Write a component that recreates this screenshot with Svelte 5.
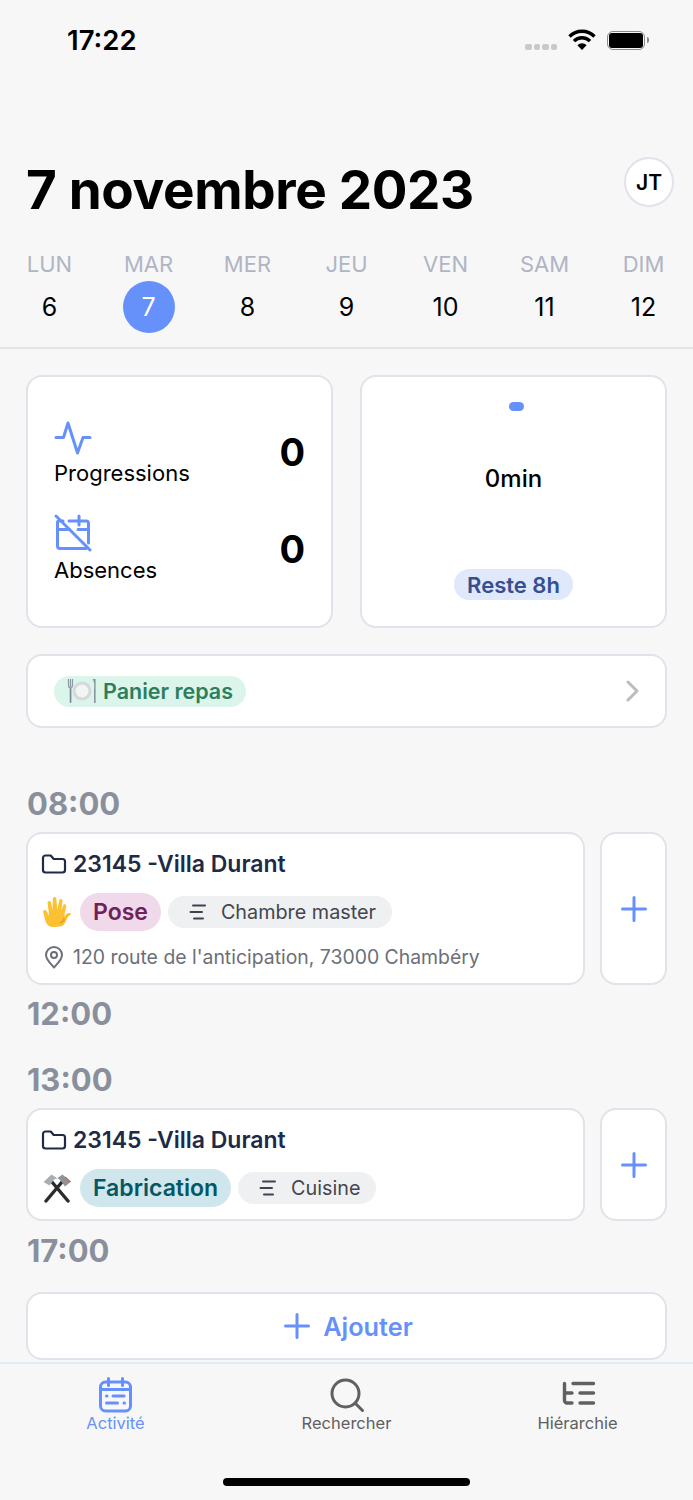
<script>
  const days = [
    { name: 'LUN', num: 6 },
    { name: 'MAR', num: 7, active: true },
    { name: 'MER', num: 8 },
    { name: 'JEU', num: 9 },
    { name: 'VEN', num: 10 },
    { name: 'SAM', num: 11 },
    { name: 'DIM', num: 12 }
  ];
</script>

{#snippet folder()}
  <svg class="folder" width="26" height="22" viewBox="0 0 26 22" fill="none" stroke="#1e2a47" stroke-width="2.2" stroke-linejoin="round">
    <path d="M2 5a2.5 2.5 0 0 1 2.5-2.5h5.2l3 3.5h8.8a2.5 2.5 0 0 1 2.5 2.5v8.5a2.5 2.5 0 0 1-2.5 2.5H4.500a2.500 2.500 0 0 1-2.500-2.500z" />
  </svg>
{/snippet}

{#snippet lines()}
  <svg width="18" height="18" viewBox="0 0 18 18" fill="none" stroke="#3f4350" stroke-width="2" stroke-linecap="round">
    <path d="M4 2.500h12M1.500 9h11.500M5 15.500h9" />
  </svg>
{/snippet}

{#snippet plus()}
  <svg width="28" height="28" viewBox="0 0 28 28" fill="none" stroke="#6691fb" stroke-width="3" stroke-linecap="round">
    <path d="M14 2.500v23M2.500 14h23" />
  </svg>
{/snippet}

<div class="screen">
  <div class="status">
    <span class="clock">17:22</span>
    <div class="indicators">
      <span class="dots"><i></i><i></i><i></i><i></i></span>
      <svg width="28" height="22" viewBox="0 0 28 22" fill="none" stroke="#000" stroke-width="3.400">
        <path d="M1.500 7.500a17.500 17.500 0 0 1 25 0" />
        <path d="M6 12.200a11 11 0 0 1 16 0" />
        <path d="M14 21l-4.600-4.800a6.500 6.500 0 0 1 9.200 0z" fill="#000" stroke="none" />
      </svg>
      <div class="battery"><div class="charge"></div></div>
    </div>
  </div>

  <header class="title-row">
    <h1>7 novembre 2023</h1>
    <div class="avatar">JT</div>
  </header>

  <div class="week">
    {#each days as day}
      <div class="day">
        <span class="day-name">{day.name}</span>
        <span class="day-num" class:active={day.active}>{day.num}</span>
      </div>
    {/each}
  </div>

  <main>
    <section class="summary">
      <div class="card stats">
        <div class="stat">
          <div>
            <svg class="stat-icon" width="38" height="34" viewBox="0 0 38 34" fill="none" stroke="#6691fb" stroke-width="3" stroke-linecap="round" stroke-linejoin="round">
              <path d="M2 16.500h7.500L14 2l9.500 30 5.500-15.500h7" />
            </svg>
            <div class="stat-label">Progressions</div>
          </div>
          <div class="stat-value">0</div>
        </div>
        <div class="stat">
          <div>
            <svg class="stat-icon" width="38" height="38" viewBox="0 0 38 38" fill="none" stroke="#6691fb" stroke-width="3" stroke-linecap="round" stroke-linejoin="round">
              <path d="M2 2l34 34" />
              <path d="M9 7H5a1.500 1.500 0 0 0-1.500 1.500V32A2.500 2.500 0 0 0 6 34.500h26" />
              <path d="M15 7h17A2.500 2.500 0 0 1 34.500 9.500V29M3.500 15.500h12M24 15.500h10.500M25 2v9" />
            </svg>
            <div class="stat-label">Absences</div>
          </div>
          <div class="stat-value">0</div>
        </div>
      </div>

      <div class="card timer">
        <span class="timer-dot"></span>
        <span class="timer-text">0min</span>
        <span class="pill remain">Reste 8h</span>
      </div>
    </section>

    <div class="card meal">
      <span class="pill green">
        <svg width="30" height="26" viewBox="0 0 30 26">
          <path d="M3.500 1v8M1.500 1v6c0 2 1 3 2 3s2-1 2-3V1" fill="none" stroke="#8d96a3" stroke-width="1.200" />
          <rect x="2.700" y="10" width="1.700" height="15" rx=".8" fill="#7f8895" />
          <circle cx="15" cy="13" r="9.500" fill="#d5d9dc" />
          <circle cx="15" cy="13" r="6.500" fill="#f3f4f4" />
          <path d="M25.500 1c2 2 2 8 1.500 11v13h1.600V1z" fill="#8a93a0" />
        </svg>
        Panier repas
      </span>
      <svg width="14" height="22" viewBox="0 0 14 22" fill="none" stroke="#bdbdbf" stroke-width="3" stroke-linecap="round" stroke-linejoin="round">
        <path d="M2 2l9 9-9 9" />
      </svg>
    </div>

    <div class="hour first">08:00</div>
    <div class="task-row">
      <div class="card task">
        <div class="task-title">{@render folder()}23145 -Villa Durant</div>
        <div class="task-tags">
          <svg class="emoji" width="30" height="32" viewBox="0 0 30 32">
            <path d="M11 31c-4.500 0-7-3-8-7.500L1.200 16c-.5-2 2.300-2.800 3.300-1l2.700 5L5.600 7c-.2-2.200 2.800-2.700 3.300-.5L10.500 14 10.800 3c0-2.600 3.400-2.600 3.600 0l.8 11L17.200 4.500c.5-2.200 3.600-1.700 3.300.5l-1.200 10 1.700-5.500c.7-2 3.600-1.200 3.200 1L22 21c2-3.500 4.800-5 6.800-3.500.6.500 0 1.200-.5 1.500-3 1.800-3.800 5-5.300 8-1.500 3.200-5 4-12 4z" fill="#fcc133" />
            <path d="M22 21c-1 3-2.500 5-6 6.500 3 .3 5.500-.8 7-3.500z" fill="#ef9d1c" />
          </svg>
          <span class="pill tag pink">Pose</span>
          <span class="pill sub">{@render lines()}<span>Chambre master</span></span>
        </div>
        <div class="task-place">
          <svg width="20" height="24" viewBox="0 0 20 24" fill="none" stroke="#6b6f78" stroke-width="2">
            <path d="M10 22.500c-4-4.500-8-8-8-12.500a8 8 0 0 1 16 0c0 4.500-4 8-8 12.500z" stroke-linejoin="round" />
            <circle cx="10" cy="10" r="3" />
          </svg>
          120 route de l'anticipation, 73000 Chambéry
        </div>
      </div>
      <div class="card add">{@render plus()}</div>
    </div>
    <div class="hour">12:00</div>

    <div class="hour gap">13:00</div>
    <div class="task-row">
      <div class="card task">
        <div class="task-title">{@render folder()}23145 -Villa Durant</div>
        <div class="task-tags">
          <svg class="emoji" width="30" height="30" viewBox="0 0 30 30" fill="none">
            <path d="M4 28L20 9M26 28L10 9" stroke="#2b2b2b" stroke-width="3.400" stroke-linecap="round" />
            <path d="M1.500 9l8-7.500 6 4-3.500 1-4.500 6z" fill="#a9aeb3" />
            <path d="M28.500 9l-8-7.500-5 3.500 3 2.500 4.500 6z" fill="#8f9499" />
            <path d="M23 4l5.500 5" stroke="#c46a55" stroke-width="1.500" />
          </svg>
          <span class="pill tag teal">Fabrication</span>
          <span class="pill sub">{@render lines()}<span>Cuisine</span></span>
        </div>
      </div>
      <div class="card add">{@render plus()}</div>
    </div>
    <div class="hour last">17:00</div>

    <div class="card add-wide">{@render plus()}Ajouter</div>
  </main>

  <nav>
    <div class="tab current">
      <svg width="36" height="36" viewBox="0 0 36 36" fill="none" stroke="#6691fb" stroke-width="3" stroke-linecap="round">
        <rect x="2.500" y="5" width="30" height="29" rx="5" />
        <path d="M10.500 1.500v7M24.500 1.500v7M2.500 12.500h30M15 19h11M8.500 19h.5M8.500 26h11M26 26h.5" />
      </svg>
      Activité
    </div>
    <div class="tab">
      <svg width="36" height="36" viewBox="0 0 36 36" fill="none" stroke="#606060" stroke-width="3" stroke-linecap="round">
        <circle cx="16.500" cy="16.500" r="13.500" />
        <path d="M26.500 26.500l7 7" />
      </svg>
      Rechercher
    </div>
    <div class="tab">
      <svg width="36" height="36" viewBox="0 0 36 36" fill="none" stroke="#606060" stroke-width="3.400" stroke-linecap="round" stroke-linejoin="round">
        <path d="M4.500 6.500v17A2.500 2.500 0 0 0 7 26h5M4.500 16h7.500M13 6.500h20.500M20 16h13.500M20 26h13.500" />
      </svg>
      Hiérarchie
    </div>
  </nav>

  <div class="home-bar"><span></span></div>
</div>

<style>
  :global(body) {
    margin: 0;
    background: #f7f7f8;
  }

  .screen {
    width: 693px;
    height: 1500px;
    overflow: hidden;
    display: flex;
    flex-direction: column;
    font-family: Inter, "Liberation Sans", sans-serif;
    color: #000;
    background: #f7f7f8;
  }

  .status {
    height: 158px;
    box-sizing: border-box;
    padding: 23px 48px 0 67px;
    display: flex;
    justify-content: space-between;
    align-items: flex-start;
  }

  .clock {
    font-size: 27.500px;
    line-height: 34px;
    font-weight: 600;
  }

  .indicators {
    display: flex;
    align-items: center;
    gap: 11px;
    height: 34px;
  }

  .dots {
    display: flex;
    gap: 2px;
    margin-top: 13px;
  }

  .dots i {
    width: 6.500px;
    height: 6px;
    border-radius: 2px;
    background: #c9c9c9;
  }

  .battery {
    width: 34px;
    height: 15px;
    padding: 1px;
    border: 1.500px solid #8a8a8a;
    border-radius: 6px;
    position: relative;
  }

  .battery::after {
    content: '';
    position: absolute;
    right: -5px;
    top: 5px;
    width: 2px;
    height: 6px;
    border-radius: 0 2px 2px 0;
    background: #8a8a8a;
  }

  .charge {
    height: 100%;
    border-radius: 3px;
    background: #000;
  }

  .title-row {
    height: 92px;
    padding: 0 19px 0 26px;
    display: flex;
    justify-content: space-between;
    align-items: flex-start;
  }

  h1 {
    margin: 0;
    font-size: 53px;
    line-height: 64px;
    font-weight: 700;
    letter-spacing: -0.35px;
  }

  .avatar {
    width: 46px;
    height: 46px;
    margin-top: -1px;
    border: 2px solid #e2e3ea;
    border-radius: 50%;
    background: #fff;
    display: flex;
    align-items: center;
    justify-content: center;
    font-size: 21px;
    font-weight: 600;
  }

  .week {
    display: grid;
    grid-template-columns: repeat(7, 99px);
    height: 97px;
    border-bottom: 2px solid #e3e3e8;
  }

  .day {
    display: flex;
    flex-direction: column;
    align-items: center;
  }

  .day-name {
    font-size: 22px;
    line-height: 28px;
    color: #b0b5c4;
  }

  .day-num {
    width: 52px;
    height: 52px;
    margin-top: 3px;
    border-radius: 50%;
    display: flex;
    align-items: center;
    justify-content: center;
    font-size: 25px;
  }

  .day-num.active {
    background: #6691fb;
    color: #fff;
  }

  main {
    flex: 1;
    padding: 26px 26px 0;
  }

  .card {
    box-sizing: border-box;
    background: #fff;
    border: 2px solid #e2e3ea;
    border-radius: 16px;
  }

  .summary {
    display: grid;
    grid-template-columns: 307px 307px;
    gap: 27px;
  }

  .stats {
    height: 253px;
    padding: 44px 26px 0 26px;
    display: flex;
    flex-direction: column;
    gap: 27px;
  }

  .stat {
    display: flex;
    justify-content: space-between;
    align-items: center;
  }

  .stat:first-child .stat-value {
    margin-bottom: 4px;
  }

  .stat-icon {
    display: block;
    margin-bottom: 5px;
  }

  .stat-label {
    font-size: 22px;
    line-height: 27px;
  }

  .stat-value {
    font-size: 38px;
    font-weight: 700;
  }

  .timer {
    height: 253px;
    position: relative;
    display: flex;
    flex-direction: column;
    align-items: center;
    padding-top: 25px;
  }

  .timer-dot {
    width: 15px;
    height: 9px;
    border-radius: 5px;
    background: #6691fb;
    margin-left: 5px;
  }

  .timer-text {
    margin-top: 53px;
    font-size: 24px;
    line-height: 30px;
    font-weight: 500;
  }

  .pill {
    display: inline-flex;
    align-items: center;
    border-radius: 16px;
    font-weight: 600;
  }

  .remain {
    margin-top: 75px;
    height: 31px;
    padding: 0 13px;
    background: #e0e8fb;
    color: #354f92;
    font-size: 22px;
  }

  .meal {
    height: 74px;
    margin-top: 26px;
    padding: 0 25px 0 26px;
    display: flex;
    align-items: center;
    justify-content: space-between;
  }

  .green {
    height: 31px;
    padding: 0 13px;
    gap: 6px;
    background: #dcf5ea;
    color: #2d7e5c;
    font-size: 21.500px;
  }

  .hour {
    font-size: 31px;
    line-height: 44px;
    font-weight: 700;
    color: #8a8f9c;
    margin: 7px 0 6px 1px;
  }

  .hour.first {
    margin-top: 54px;
  }

  .hour.gap {
    margin-top: 22px;
  }

  .hour.last {
    margin-top: 8px;
  }

  .task-row {
    display: flex;
    gap: 15px;
  }

  .task {
    width: 559px;
    padding: 15px 13px 12px 14px;
  }

  .task-title {
    display: flex;
    align-items: center;
    gap: 6px;
    font-size: 23px;
    line-height: 30px;
    font-weight: 600;
    color: #1e2a47;
  }

  .folder {
    margin-left: -1px;
  }

  .task-tags {
    display: flex;
    align-items: center;
    margin-top: 14px;
    height: 38px;
  }

  .emoji {
    flex: none;
    margin-right: 8px;
  }

  .tag {
    height: 38px;
    padding: 0 13px;
    border-radius: 19px;
    font-size: 23px;
  }

  .pink {
    background: #f0d9ea;
    color: #6f2158;
  }

  .teal {
    background: #cfe6ed;
    color: #065663;
  }

  .sub {
    height: 32px;
    margin-left: 7px;
    padding: 0 16px 0 21px;
    gap: 14px;
    background: #eff0f2;
    color: #43464f;
    font-size: 19.800px;
    font-weight: 400;
  }

  .task-place {
    display: flex;
    align-items: center;
    gap: 9px;
    margin-top: 12px;
    margin-left: 2px;
    color: #6b6f78;
    font-size: 19.400px;
    line-height: 28px;
  }

  .add {
    width: 67px;
    display: flex;
    align-items: center;
    justify-content: center;
  }

  .add-wide {
    height: 68px;
    margin-top: 19px;
    padding-left: 3px;
    display: flex;
    align-items: center;
    justify-content: center;
    gap: 12px;
    color: #6691fb;
    font-size: 25.300px;
    font-weight: 600;
  }

  nav {
    height: 92px;
    box-sizing: border-box;
    border-top: 2px solid #e3e9fb;
    display: grid;
    grid-template-columns: repeat(3, 231px);
  }

  .tab {
    display: flex;
    flex-direction: column;
    align-items: center;
    padding-top: 13px;
    color: #606060;
    font-size: 16.500px;
    line-height: 20px;
  }

  .tab.current {
    color: #6691fb;
  }

  .home-bar {
    height: 46px;
    display: flex;
    justify-content: center;
  }

  .home-bar span {
    width: 247px;
    height: 8px;
    margin-top: 24px;
    border-radius: 4px;
    background: #000;
  }
</style>
